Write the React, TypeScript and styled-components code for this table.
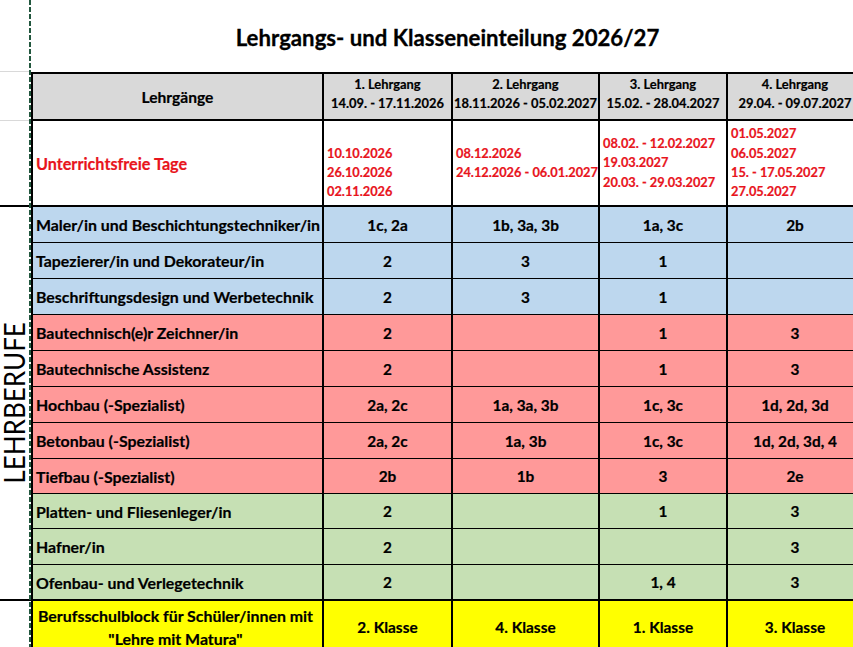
import React from 'react';
import styled, { createGlobalStyle, css } from 'styled-components';

const Global = createGlobalStyle`
  html, body { margin: 0; padding: 0; background: #fff; }
  body { font-family: Lato, "Open Sans", "Noto Sans", sans-serif; color: #000; }
  * { box-sizing: border-box; }
`;

type Tone = 'blue' | 'red' | 'green' | 'yellow' | 'gray' | 'white';
const fills: Record<Tone, string> = {
  blue: '#bdd7ee',
  red: '#ff9999',
  green: '#c6e0b4',
  yellow: '#ffff00',
  gray: '#d9d9d9',
  white: '#ffffff',
};

const RED = '#e8141c';

const Sheet = styled.div`
  position: relative;
  width: 853px;
  height: 647px;
  overflow: hidden;
  background: #fff;
`;

const PageBreak = styled.div`
  position: absolute;
  left: 29px;
  top: 0;
  bottom: 0;
  width: 2px;
  background: repeating-linear-gradient(to bottom, #22573e 0 5px, #ffffff00 5px 7px);
`;

const Grid = styled.div`
  display: grid;
  width: 864px;
  grid-template-columns: 31px 293px 129px 147px 128px 136px;
  grid-template-rows: 72px 49px 86px repeat(7, 36px) 35px 35px 36px 36px 52px;
  -webkit-text-stroke: 0.2px currentColor;
`;

const SideCell = styled.div<{ $line?: 'grid' | 'black' }>`
  border-bottom: ${(p) =>
    p.$line === 'grid' ? '1px solid #d9d9d9' : p.$line === 'black' ? '2px solid #000' : 'none'};
`;

const GroupCell = styled.div<{ $rows: number }>`
  grid-row: span ${(p) => p.$rows};
  border-bottom: 2px solid #000;
  display: flex;
  align-items: center;
  justify-content: center;
  overflow: visible;
`;

const Vertical = styled.div`
  writing-mode: vertical-rl;
  transform: rotate(180deg) scaleY(0.93);
  font-size: 28px;
  font-weight: 400;
  line-height: 28px;
  margin-right: 3px;
  -webkit-text-stroke: 0;
  white-space: nowrap;
`;

const TitleCell = styled.div`
  grid-column: 2 / span 5;
  display: flex;
  align-items: center;
  justify-content: center;
  padding: 3px 0 0 0;
  font-size: 22.2px;
  font-weight: 700;
  -webkit-text-stroke: 0.3px #000;
`;

const Cell = styled.div<{ $fill?: Tone; $top?: number; $bottom?: number; $first?: boolean }>`
  display: flex;
  flex-direction: column;
  justify-content: center;
  min-width: 0;
  overflow: hidden;
  white-space: nowrap;
  font-weight: 700;
  background: ${(p) => fills[p.$fill ?? 'white']};
  border-right: 2px solid #000;
  border-top: ${(p) => p.$top ?? 0}px solid #000;
  border-bottom: ${(p) => p.$bottom ?? 0}px solid #000;
  ${(p) =>
    p.$first &&
    css`
      border-left: 2px solid #000;
    `}
`;

const HeadCell = styled(Cell)`
  align-items: center;
  text-align: center;
  padding-bottom: 6px;
  font-size: 12.9px;
  line-height: 19px;
`;

const HeadLabel = styled(Cell)`
  align-items: center;
  font-size: 15.6px;
`;

const HolidayLabel = styled(Cell)`
  padding-left: 3px;
  color: ${RED};
  font-size: 16.2px;
`;

const HolidayCell = styled(Cell)`
  padding-left: 3px;
  color: ${RED};
  font-size: 12.8px;
  line-height: 19.3px;
`;

const Line = styled.div`
  min-height: 19.3px;
`;

const RowLabel = styled(Cell)`
  padding-left: 3px;
  font-size: 15.9px;
`;

const ValueCell = styled(Cell)`
  align-items: center;
  font-size: 15.4px;
`;

const MaturaLabel = styled(RowLabel)`
  white-space: normal;
  text-align: center;
  line-height: 23px;
  padding: 0 6px 0 2px;
`;

const courses = [
  { name: '1. Lehrgang', span: '14.09. - 17.11.2026', free: ['', '10.10.2026', '26.10.2026', '02.11.2026'] },
  { name: '2. Lehrgang', span: '18.11.2026 - 05.02.2027', free: ['08.12.2026', '24.12.2026 - 06.01.2027'] },
  { name: '3. Lehrgang', span: '15.02. - 28.04.2027', free: ['08.02. - 12.02.2027', '19.03.2027', '20.03. - 29.03.2027'] },
  { name: '4. Lehrgang', span: '29.04. - 09.07.2027', free: ['01.05.2027', '06.05.2027', '15. - 17.05.2027', '27.05.2027'] },
];

const rows: { label: string; tone: Tone; values: string[] }[] = [
  { label: 'Maler/in und Beschichtungstechniker/in', tone: 'blue', values: ['1c, 2a', '1b, 3a, 3b', '1a, 3c', '2b'] },
  { label: 'Tapezierer/in und Dekorateur/in', tone: 'blue', values: ['2', '3', '1', ''] },
  { label: 'Beschriftungsdesign und Werbetechnik', tone: 'blue', values: ['2', '3', '1', ''] },
  { label: 'Bautechnisch(e)r Zeichner/in', tone: 'red', values: ['2', '', '1', '3'] },
  { label: 'Bautechnische Assistenz', tone: 'red', values: ['2', '', '1', '3'] },
  { label: 'Hochbau (-Spezialist)', tone: 'red', values: ['2a, 2c', '1a, 3a, 3b', '1c, 3c', '1d, 2d, 3d'] },
  { label: 'Betonbau (-Spezialist)', tone: 'red', values: ['2a, 2c', '1a, 3b', '1c, 3c', '1d, 2d, 3d, 4'] },
  { label: 'Tiefbau (-Spezialist)', tone: 'red', values: ['2b', '1b', '3', '2e'] },
  { label: 'Platten- und Fliesenleger/in', tone: 'green', values: ['2', '', '1', '3'] },
  { label: 'Hafner/in', tone: 'green', values: ['2', '', '', '3'] },
  { label: 'Ofenbau- und Verlegetechnik', tone: 'green', values: ['2', '', '1, 4', '3'] },
];

const matura = ['2. Klasse', '4. Klasse', '1. Klasse', '3. Klasse'];

export default function App() {
  return (
    <Sheet>
      <Global />
      <Grid>
        <SideCell $line="grid" />
        <TitleCell>Lehrgangs- und Klasseneinteilung 2026/27</TitleCell>

        <SideCell $line="grid" />
        <HeadLabel $fill="gray" $top={2} $bottom={2} $first>
          Lehrgänge
        </HeadLabel>
        {courses.map((c) => (
          <HeadCell key={c.name} $fill="gray" $top={2} $bottom={2}>
            <div>{c.name}</div>
            <div>{c.span}</div>
          </HeadCell>
        ))}

        <SideCell $line="black" />
        <HolidayLabel $bottom={2} $first>
          Unterrichtsfreie Tage
        </HolidayLabel>
        {courses.map((c) => (
          <HolidayCell key={c.name} $bottom={2}>
            {c.free.map((f, i) => (
              <Line key={i}>{f || '\u00a0'}</Line>
            ))}
          </HolidayCell>
        ))}

        {rows.map((r, i) => {
          const bottom = i === rows.length - 1 ? 2 : 1;
          return (
            <React.Fragment key={r.label}>
              {i === 0 && (
                <GroupCell $rows={rows.length}>
                  <Vertical>LEHRBERUFE</Vertical>
                </GroupCell>
              )}
              <RowLabel $fill={r.tone} $bottom={bottom} $first>
                {r.label}
              </RowLabel>
              {r.values.map((v, j) => (
                <ValueCell key={j} $fill={r.tone} $bottom={bottom}>
                  {v}
                </ValueCell>
              ))}
            </React.Fragment>
          );
        })}

        <SideCell />
        <MaturaLabel $fill="yellow" $first>
          Berufsschulblock für Schüler/innen mit "Lehre mit Matura"
        </MaturaLabel>
        {matura.map((k) => (
          <ValueCell key={k} $fill="yellow">
            {k}
          </ValueCell>
        ))}
      </Grid>
      <PageBreak />
    </Sheet>
  );
}
